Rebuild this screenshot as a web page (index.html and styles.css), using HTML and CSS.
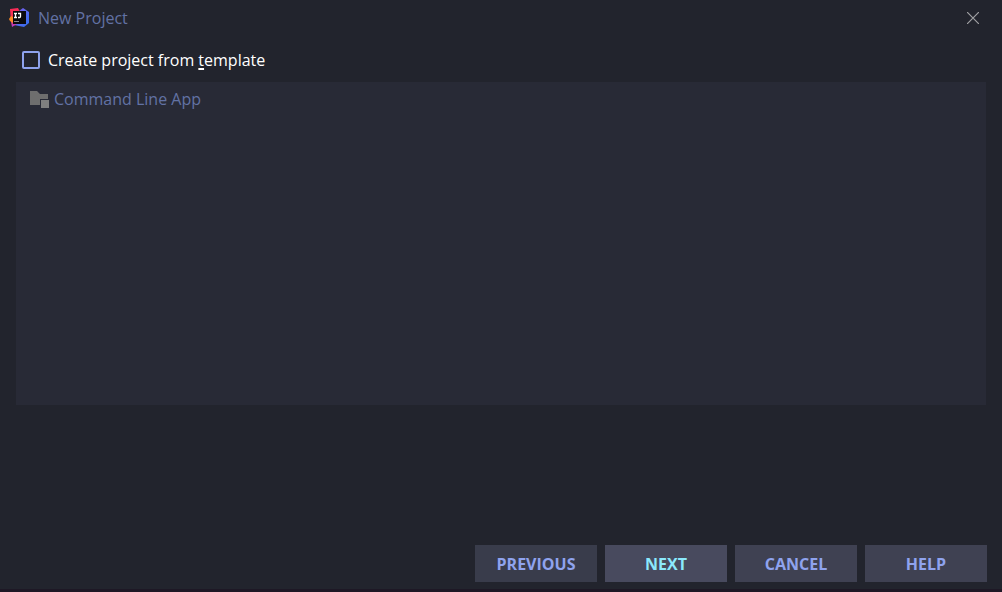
FILE: index.html
```html
<!DOCTYPE html>
<html lang="en">
<head>
<meta charset="utf-8">
<title>New Project</title>
<link rel="stylesheet" href="styles.css">
</head>
<body>
<main class="dialog">
  <header class="titlebar">
    <svg class="logo" viewBox="0 0 20 20" aria-hidden="true">
      <defs>
        <linearGradient id="blue" x1="0" y1="0" x2="1" y2="1"><stop offset="0" stop-color="#8a4be0"/><stop offset=".45" stop-color="#5d6bf2"/><stop offset="1" stop-color="#2e6bea"/></linearGradient>
        <linearGradient id="red" x1="0" y1="0" x2="0" y2="1"><stop offset="0" stop-color="#fb2a58"/><stop offset=".55" stop-color="#f5364f"/><stop offset="1" stop-color="#b63ad0"/></linearGradient>
      </defs>
      <path fill="url(#blue)" d="M10 3 14 0 20 4V15L15 19 10 18 5 17Z"/>
      <path fill="url(#red)" d="M1 1 9 0 11 4 8 16 3 19 2 14Z"/>
      <path fill="#ff8b24" d="M0 11 2 8 4 9V15L1 13Z"/>
      <path fill="#0b0a0d" d="M4 3H17V16H4Z"/>
      <path fill="none" stroke="#fff" stroke-width="1.3" d="M5 5.5H8M6.5 5V9.5M5 9.5H8M9 5.5H11.5V8.5Q11.5 9.5 10.5 9.5H9"/>
      <path fill="#888" d="M5 13H10V14H5Z"/>
    </svg>
    <h1 class="title">New Project</h1>
    <button class="close" type="button" aria-label="Close">
      <svg class="close-icon" viewBox="0 0 12 12" aria-hidden="true"><path d="M0 0 12 12M12 0 0 12"/></svg>
    </button>
  </header>
  <label class="option">
    <input class="checkbox" type="checkbox">
    <span>Create project from <u class="mnemonic">t</u>emplate</span>
  </label>
  <ul class="templates">
    <li class="template">
      <svg class="folder" viewBox="0 0 20 18" aria-hidden="true">
        <path fill="#6e6e6e" d="M0 1H7L10 4H18V9H10V15H0Z"/>
        <path fill="#7f7f7f" d="M11 10H19V18H11Z"/>
      </svg>
      <span>Command Line App</span>
    </li>
  </ul>
  <footer class="actions">
    <button class="button" type="button">PREVIOUS</button>
    <button class="button button-default" type="button">NEXT</button>
    <button class="button button-raised" type="button">CANCEL</button>
    <button class="button button-raised" type="button">HELP</button>
  </footer>
</main>
</body>
</html>
```
FILE: styles.css
```css
* {
  box-sizing: border-box;
}

body {
  margin: 0;
  background: #22242d;
  font: 16px/24px "Open Sans", "Noto Sans", sans-serif;
}

.dialog {
  display: flex;
  flex-direction: column;
  min-height: 100vh;
  border-bottom: 3px solid #1e1825;
}

.titlebar {
  display: flex;
  align-items: center;
  height: 36px;
  padding: 0 16px 0 9px;
  color: #6272a4;
}

.logo {
  width: 20px;
  height: 20px;
  margin-right: 9px;
}

.title {
  flex: 1;
  margin: 0;
  font-size: 16px;
  font-weight: 400;
}

.close {
  display: flex;
  padding: 7px;
  border: 0;
  background: none;
}

.close-icon {
  width: 12px;
  height: 12px;
  fill: none;
  stroke: #a0a0a3;
  stroke-width: 1.2;
}

.option {
  display: flex;
  align-items: center;
  align-self: flex-start;
  gap: 8px;
  padding: 12px 22px 10px;
  color: #fff;
}

.checkbox {
  appearance: none;
  width: 18px;
  height: 18px;
  margin: 0;
  border: 2px solid #8fa3ee;
  border-radius: 2px;
}

.mnemonic {
  text-decoration-thickness: 2px;
  text-underline-offset: 2px;
}

.templates {
  flex: 1;
  margin: 0 16px 140px;
  padding: 5px 14px;
  background: #282a36;
  color: #6272a4;
  list-style: none;
}

.template {
  display: flex;
  align-items: center;
  gap: 4px;
}

.folder {
  width: 20px;
  height: 18px;
}

.actions {
  display: flex;
  justify-content: flex-end;
  gap: 8px;
  padding: 0 15px 7px;
}

.button {
  width: 122px;
  height: 37px;
  padding: 0;
  border: 0;
  background: #393c4b;
  color: #8fa3ee;
  font: 700 16px/24px "Open Sans", "Noto Sans", sans-serif;
}

.button-raised {
  background: #3f4152;
}

.button-default {
  background: #484a5e;
  color: #8be9fd;
}
```
